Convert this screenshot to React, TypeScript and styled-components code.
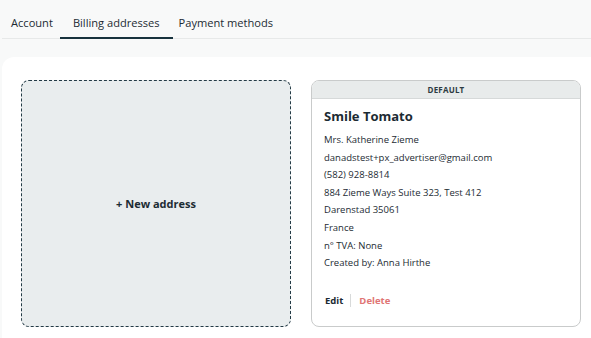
import React from 'react';
import styled, { createGlobalStyle } from 'styled-components';

const GlobalStyle = createGlobalStyle`
  html, body {
    margin: 0;
    padding: 0;
    background: #f8f9f9;
    font-family: "Open Sans", "Noto Sans", sans-serif;
    color: #1c2b33;
  }
  * { box-sizing: border-box; }
`;

const Page = styled.div`
  width: 591px;
  height: 338px;
  overflow: hidden;
  padding-top: 12px;
`;

const Tabs = styled.nav`
  display: flex;
  margin-left: 2px;
  border-bottom: 1px solid #e7e9e9;
`;

const Tab = styled.button<{ $active?: boolean }>`
  background: none;
  border: none;
  font-family: inherit;
  font-size: 11.1px;
  line-height: 16px;
  color: #1c2b33;
  padding: 3px 13px 6px 13px;
  margin-bottom: -1px;
  border-bottom: 2px solid ${p => (p.$active ? '#17323d' : 'transparent')};
  cursor: pointer;
  &:first-child {
    padding-left: 9px;
    padding-right: 7px;
  }
  &:last-child {
    padding-left: 6px;
  }
`;

const Panel = styled.section`
  margin: 18px -20px 0 2px;
  background: #fff;
  border-radius: 12px 12px 0 0;
  padding: 23px 19px;
  display: flex;
  gap: 20px;
  height: 300px;
`;

const NewAddress = styled.button`
  width: 270px;
  height: 247px;
  border: 1px dashed #233a45;
  border-radius: 8px;
  background: #e9edee;
  font-family: inherit;
  font-size: 11px;
  font-weight: 700;
  color: #1c2b33;
  cursor: pointer;
`;

const Card = styled.article`
  width: 270px;
  height: 247px;
  border: 1px solid #c9cbcb;
  border-radius: 8px;
  overflow: hidden;
  display: flex;
  flex-direction: column;
`;

const CardHeader = styled.div`
  background: #e8ebeb;
  border-bottom: 1px solid #d6d9d9;
  height: 18px;
  display: flex;
  align-items: center;
  justify-content: center;
  font-size: 8px;
  font-weight: 700;
  letter-spacing: 0.2px;
  color: #2d3b42;
`;

const CardBody = styled.div`
  padding: 6px 12px 0;
  flex: 1;
  display: flex;
  flex-direction: column;
`;

const Name = styled.h3`
  margin: 0 0 4px;
  font-size: 13px;
  font-weight: 700;
  line-height: 22px;
`;

const Line = styled.div`
  font-size: 9.5px;
  line-height: 17.6px;
`;

const Actions = styled.div`
  margin-top: auto;
  margin-bottom: 19px;
  display: flex;
  align-items: center;
  padding-left: 1px;
`;

const Action = styled.button<{ $danger?: boolean }>`
  background: none;
  border: none;
  padding: 0;
  font-family: inherit;
  font-size: 9.5px;
  font-weight: 700;
  color: ${p => (p.$danger ? '#e07575' : '#1c2b33')};
  cursor: pointer;
`;

const Divider = styled.span`
  width: 1px;
  height: 13px;
  background: #d8dada;
  margin: 0 8px 0 7px;
`;

const lines = [
  'Mrs. Katherine Zieme',
  'danadstest+px_advertiser@gmail.com',
  '(582) 928-8814',
  '884 Zieme Ways Suite 323, Test 412',
  'Darenstad 35061',
  'France',
  'n° TVA: None',
  'Created by: Anna Hirthe',
];

const App = () => (
  <Page>
    <GlobalStyle />
    <Tabs>
      <Tab>Account</Tab>
      <Tab $active>Billing addresses</Tab>
      <Tab>Payment methods</Tab>
    </Tabs>
    <Panel>
      <NewAddress>+ New address</NewAddress>
      <Card>
        <CardHeader>DEFAULT</CardHeader>
        <CardBody>
          <Name>Smile Tomato</Name>
          {lines.map(l => (
            <Line key={l}>{l}</Line>
          ))}
          <Actions>
            <Action>Edit</Action>
            <Divider />
            <Action $danger>Delete</Action>
          </Actions>
        </CardBody>
      </Card>
    </Panel>
  </Page>
);

export default App;
